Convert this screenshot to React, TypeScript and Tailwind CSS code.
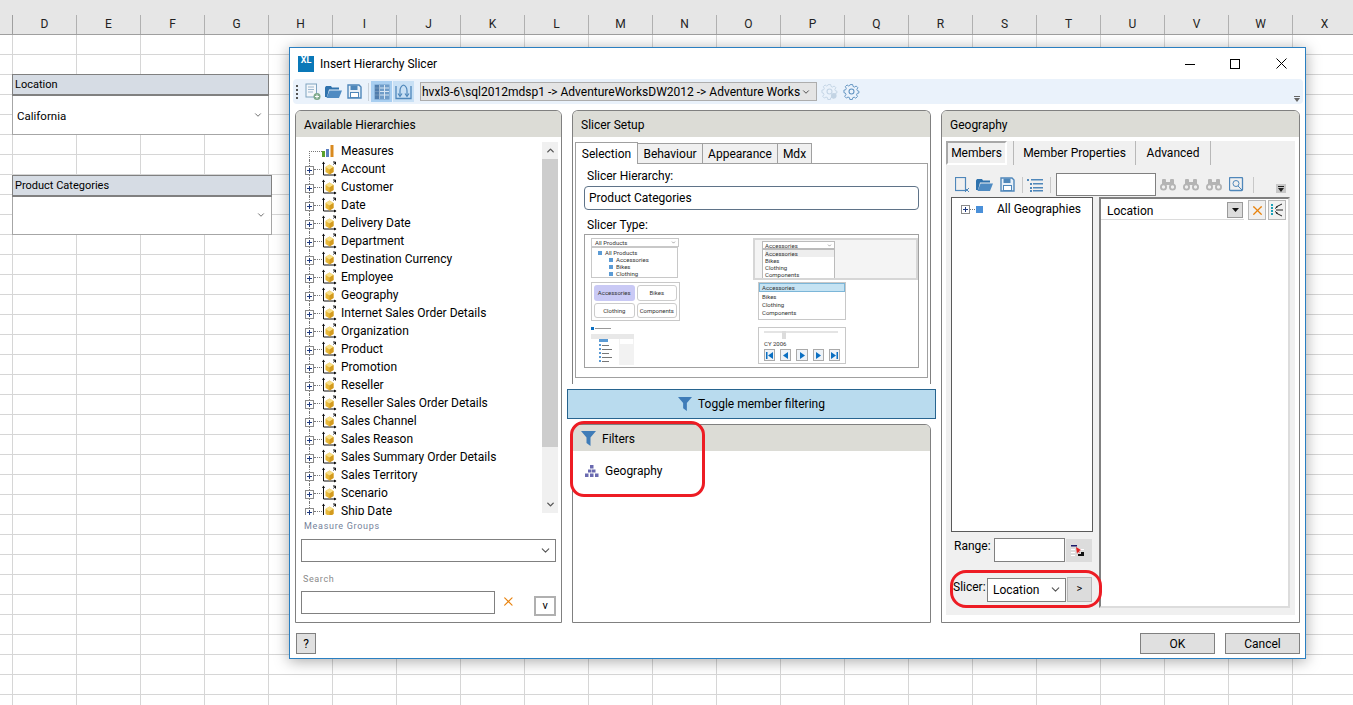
import { ChevronDown, ChevronUp, X } from 'lucide-react';

const columns = ['D', 'E', 'F', 'G', 'H', 'I', 'J', 'K', 'L', 'M', 'N', 'O', 'P', 'Q', 'R', 'S', 'T', 'U', 'V', 'W', 'X'];
const rows = Array.from({ length: 34 }, (_, i) => i);
const hierarchies = [
  'Account', 'Customer', 'Date', 'Delivery Date', 'Department', 'Destination Currency', 'Employee', 'Geography',
  'Internet Sales Order Details', 'Organization', 'Product', 'Promotion', 'Reseller', 'Reseller Sales Order Details',
  'Sales Channel', 'Sales Reason', 'Sales Summary Order Details', 'Sales Territory', 'Scenario', 'Ship Date',
];

function Sheet() {
  return (
    <div className="flex flex-col">
      <div className="h-[15px] bg-[#e6e6e6]" />
      <div className="flex h-[20px] bg-[#e6e6e6] border-b border-[#9f9f9f]">
        <div className="w-[13px] shrink-0 border-r border-[#9f9f9f]" />
        {columns.map((c) => (
          <div key={c} className="w-[64px] shrink-0 border-r border-[#b0b0b0] text-center text-[12px] leading-[19px] text-[#222]">
            {c}
          </div>
        ))}
      </div>
      {rows.map((r) => (
        <div key={r} className="flex h-[20px] shrink-0 border-b border-[#d6d6d6]">
          <div className="w-[13px] shrink-0 border-r border-[#d6d6d6]" />
          {columns.map((c) => (
            <div key={c} className="w-[64px] shrink-0 border-r border-[#d6d6d6]" />
          ))}
        </div>
      ))}
    </div>
  );
}

function SheetSlicer({ title, value, className }: { title: string; value?: string; className: string }) {
  return (
    <div className={`absolute flex flex-col ${className}`}>
      <div className="h-[22px] shrink-0 border-2 border-[#808080] border-l border-r border-t bg-[#d6dce4] pl-[2px] text-[11px] leading-[20px] text-black">
        {title}
      </div>
      <div className="flex flex-1 items-center justify-between border border-t-0 border-[#a6a6a6] bg-white pl-[4px] pr-[5px] pt-[3px] text-[11.500px] text-black">
        <span>{value}</span>
        <ChevronDown size={10} className="mb-[4px] text-[#555]" strokeWidth={2} />
      </div>
    </div>
  );
}

function XlLogo() {
  return (
    <div className="flex h-[16px] w-[16px] items-start justify-center bg-[#0a78b8] text-[9px] font-bold leading-[9px] text-white">
      XL
    </div>
  );
}

function NewDocIcon() {
  return (
    <svg width="16" height="18" viewBox="0 0 16 18" className="shrink-0">
      <rect x="1" y="1" width="10.5" height="13" fill="#f4f7fa" stroke="#7fa3c0" />
      <path d="M3 4h6M3 6.5h6M3 9h5" stroke="#9db8cf" />
      <circle cx="12" cy="13.5" r="3.5" fill="#7da98a" />
      <path d="M10 13.5h4M12 11.5v4" stroke="#fff" />
    </svg>
  );
}

function FolderIcon() {
  return (
    <svg width="17" height="14" viewBox="0 0 17 14" className="shrink-0">
      <path d="M0 2.5 1 1h5l1 1.5h7v2H4L2 12H0z" fill="#2f72ad" />
      <path d="M4.5 5.5H17L14 13H1.5z" fill="#4f8bc2" />
    </svg>
  );
}

function SaveIcon() {
  return (
    <svg width="15" height="15" viewBox="0 0 15 15" className="shrink-0">
      <path d="M1 1h11l2 2v11H1z" fill="#e8f0f8" stroke="#4f87ba" strokeWidth="1.4" />
      <rect x="3.5" y="1.5" width="7" height="4.5" fill="#4f87ba" />
      <rect x="3.5" y="8.5" width="8" height="5" fill="#fff" stroke="#4f87ba" />
    </svg>
  );
}

function GridIcon() {
  return (
    <svg width="16" height="16" viewBox="0 0 16 16">
      <rect x="0.5" y="0.5" width="15" height="15" fill="#6f9cc8" />
      <path d="M5.5 1v14M10.5 1v14M1 4h14M1 7.500h14M1 11h14" stroke="#d8e6f3" />
      <rect x="1" y="1" width="4.500" height="14" fill="#44719f" opacity=".7" />
    </svg>
  );
}

function SwapIcon() {
  return (
    <svg width="17" height="16" viewBox="0 0 17 16" fill="none" stroke="#4f87ba">
      <path d="M1 2v12.500h15V2" strokeWidth="1.300" />
      <path d="M5 12V7c0-3 1-5 3.500-6M12 12V7c0-3-1-5-3.500-6" strokeWidth="1.200" />
      <path d="M3 9.500 5 12.500l2-3M10 9.500l2 3 2-3" strokeWidth="1.200" />
    </svg>
  );
}

function GearIcon({ color, check }: { color: string; check?: boolean }) {
  return (
    <svg width="17" height="17" viewBox="0 0 24 24" fill="none" stroke={color} strokeWidth="1.500" className="shrink-0">
      <path d="M10 2h4l.6 3 2.400 1 2.600-1.700 2.800 2.800L20.700 9.700l1 2.300 2.300.6v3l-2.800.6-1 2.400 1.600 2.500-2.800 2.800-2.600-1.700-2.300 1-.6 2.800h-4l-.6-3-2.400-1-2.500 1.700-2.800-2.800L3.300 18l-1-2.300L0 15v-4l2.800-.6 1-2.400L2.200 5.400 5 2.600l2.500 1.700 2-.9z" transform="scale(.88) translate(1.500 .5)" />
      <circle cx="12" cy="12" r="3.500" />
      {check && <circle cx="18" cy="18" r="4" fill={color} stroke="none" />}
    </svg>
  );
}

function HierarchyIcon() {
  return (
    <svg width="15" height="16" viewBox="0 0 15 16" className="shrink-0">
      <path d="M1.500 1.500v12.500H14" fill="none" stroke="#111" />
      <path d="M0 3l1.500-2.500L3 3zM12 12.500l2.500 1.500-2.500 1.500z" fill="#111" />
      <path d="M11.500 3.500l2-2.500" stroke="#111" />
      <path d="M11 1h2.500v2.500" fill="none" stroke="#111" />
      <path d="M3.500 6l4-2.500 4 2.500v5l-4 2.500-4-2.500z" fill="#e8b838" />
      <path d="M3.500 6l4 2.500 4-2.500-4-2.500z" fill="#f7de86" />
      <path d="M11.500 6v5l-4 2.500V8.500z" fill="#d39a1f" />
    </svg>
  );
}

function MeasuresIcon() {
  return (
    <svg width="12" height="12" viewBox="0 0 12 12" className="shrink-0">
      <rect x="0" y="6" width="3" height="6" fill="#5aa02c" />
      <rect x="4" y="4" width="3" height="8" fill="#5a7fc0" />
      <rect x="8.500" y="0" width="3" height="12" fill="#d98a1f" />
    </svg>
  );
}

function PlusBox() {
  return (
    <span className="flex h-[9px] w-[9px] shrink-0 items-center justify-center border border-[#8a8a8a] bg-white text-[9px] leading-none text-[#2a3f7a]">
      <svg width="5" height="5" viewBox="0 0 5 5"><path d="M0 2.500h5M2.500 0v5" stroke="#1f3a80" /></svg>
    </span>
  );
}

function TreeRow({ label, measures }: { label: string; measures?: boolean }) {
  return (
    <div className="relative flex h-[18px] shrink-0 items-center text-[12px] text-black">
      <span className={`absolute left-[7px] w-0 border-l border-dotted border-[#777] ${measures ? 'top-[9px] bottom-0' : 'top-0 bottom-0'}`} />
      {measures ? (
        <span className="ml-[7px] w-[13px] shrink-0 border-t border-dotted border-[#777]" />
      ) : (
        <>
          <span className="relative ml-[3px] mt-[2px]"><PlusBox /></span>
          <span className="w-[8px] shrink-0 border-t border-dotted border-[#777]" />
        </>
      )}
      {measures ? <MeasuresIcon /> : <HierarchyIcon />}
      <span className={`whitespace-nowrap ${measures ? 'ml-[7px]' : 'ml-[4px]'}`}>{label}</span>
    </div>
  );
}

function PanelHeader({ children }: { children: React.ReactNode }) {
  return (
    <div className="flex h-[26px] shrink-0 items-center rounded-t-[5px] bg-[#dcdcd6] pl-[8px] pt-[1px] text-[12px] text-black">
      {children}
    </div>
  );
}

function Funnel({ size = 15 }: { size?: number }) {
  return (
    <svg width={size} height={size} viewBox="0 0 15 15" className="shrink-0">
      <path d="M0 0h15L9.500 6.500V15l-4-3V6.500z" fill="#3f7cb8" />
    </svg>
  );
}

function AvailableHierarchies() {
  return (
    <div className="flex w-[267px] shrink-0 flex-col rounded-t-[6px] border border-[#808080]">
      <PanelHeader>Available Hierarchies</PanelHeader>
      <div className="flex h-[378px] shrink-0 pt-[5px] pl-[6px] pr-[3px]">
        <div className="h-[373px] flex-1 overflow-hidden">
          <TreeRow label="Measures" measures />
          {hierarchies.map((h) => (
            <TreeRow key={h} label={h} />
          ))}
        </div>
        <div className="flex h-[371px] w-[16px] shrink-0 flex-col bg-[#f0f0f0]">
          <div className="flex h-[17px] items-center justify-center"><ChevronUp size={11} strokeWidth={3} className="text-[#555]" /></div>
          <div className="h-[288px] bg-[#cdcdcd]" />
          <div className="flex-1" />
          <div className="flex h-[17px] items-center justify-center"><ChevronDown size={11} strokeWidth={3} className="text-[#555]" /></div>
        </div>
      </div>
      <div className="mt-[5px] pl-[8px] text-[9px] leading-[12px] tracking-[.7px] text-[#74819a]">Measure Groups</div>
      <div className="mx-[5px] mt-[7px] flex h-[23px] items-center justify-end border border-[#808080] bg-white pr-[3px]">
        <ChevronDown size={13} className="text-[#555]" />
      </div>
      <div className="mt-[11px] pl-[7px] text-[9px] leading-[12px] tracking-[.6px] text-[#8a8a8a]">Search</div>
      <div className="mx-[5px] mt-[6px] flex items-start">
        <div className="h-[23px] w-[197px] border border-[#808080] bg-white" />
        <X size={15} className="ml-[6px] mt-[3px] text-[#e8820c]" strokeWidth={1.800} />
        <div className="ml-[19px] mt-[5px] flex h-[20px] w-[22px] items-center justify-center border-2 border-[#b0b0b0] bg-white text-[11px] text-black">v</div>
      </div>
    </div>
  );
}

function ThumbFrame({ className, children }: { className: string; children?: React.ReactNode }) {
  return <div className={`overflow-hidden border border-[#c8c8c8] bg-white text-[6px] leading-[7px] text-[#333] ${className}`}>{children}</div>;
}

function NavGlyph({ d }: { d: string }) {
  return (
    <span className="flex h-[12px] w-[12px] items-center justify-center border border-[#aaa] bg-[#eef3f8]">
      <svg width="9" height="9" viewBox="0 0 9 9"><path d={d} fill="#0a6fc2" /></svg>
    </span>
  );
}

function MiniTreeLine({ wide }: { wide?: boolean }) {
  return (
    <div className="mt-[2px] flex items-center gap-[1px]">
      <span className="h-[2px] w-[2px] bg-[#5b9bd5]" />
      <span className={`h-[1px] bg-[#777] ${wide ? 'w-[10px]' : 'w-[7px]'}`} />
    </div>
  );
}

function SlicerTypes() {
  return (
    <div className="mx-[8px] flex h-[134px] shrink-0 gap-[72px] border border-[#a0a0a0] bg-white pl-[6px] pt-[3px]">
      <div className="flex w-[90px] shrink-0 flex-col">
        <div className="h-[40px] overflow-hidden text-[6px] leading-[7px] text-[#333]">
          <div className="flex h-[9px] w-[88px] items-center justify-between border border-[#c8c8c8] pl-[3px] pr-[2px]">All Products<ChevronDown size={5} /></div>
          <div className="h-[31px] w-[87px] border border-[#c8c8c8] pl-[6px] pt-[1px]">
            <div className="flex items-center gap-[3px]"><span className="h-[4px] w-[4px] bg-[#5b9bd5]" /><span>All Products</span></div>
            <div className="ml-[11px] flex items-center gap-[3px]"><span className="h-[4px] w-[4px] bg-[#5b9bd5]" /><span>Accessories</span></div>
            <div className="ml-[11px] flex items-center gap-[3px]"><span className="h-[4px] w-[4px] bg-[#5b9bd5]" /><span>Bikes</span></div>
            <div className="ml-[11px] flex items-center gap-[3px]"><span className="h-[4px] w-[4px] bg-[#5b9bd5]" /><span>Clothing</span></div>
          </div>
        </div>
        <ThumbFrame className="mt-[4px] grid h-[39px] w-[89px] grid-cols-2 gap-[2px] p-[2px]">
          <div className="flex items-center justify-center rounded-[3px] bg-[#c9c9f5]">Accessories</div>
          <div className="flex items-center justify-center rounded-[3px] border border-[#ccc]">Bikes</div>
          <div className="flex items-center justify-center rounded-[3px] border border-[#ccc]">Clothing</div>
          <div className="flex items-center justify-center rounded-[3px] border border-[#ccc]">Components</div>
        </ThumbFrame>
        <div className="mt-[6px] flex h-[38px] w-[43px] flex-col overflow-hidden">
          <div className="flex h-[7px] shrink-0 items-start gap-[1px] bg-white">
            <span className="h-[3px] w-[3px] bg-[#0a6fc2]" />
            <span className="mt-[1px] h-[1px] w-[16px] bg-[#999]" />
          </div>
          <div className="h-[5px] shrink-0 bg-[#e8e8e8]" />
          <div className="flex flex-1 bg-[#f2f2f2]">
            <div className="h-full w-[28px] bg-white pl-[8px]">
              <div className="h-[3px] w-[9px] bg-[#5b9bd5]" />
              <MiniTreeLine />
              <MiniTreeLine wide />
              <MiniTreeLine />
              <MiniTreeLine wide />
              <MiniTreeLine />
            </div>
            <div className="ml-[1px] h-[5px] w-[13px] bg-white" />
          </div>
        </div>
      </div>
      <div className="flex w-[165px] shrink-0 flex-col">
        <div className="h-[42px] bg-[#d6d6d6] p-[2px]">
          <div className="h-[38px] overflow-hidden bg-[#f4f4f4] pl-[7px] pt-[1px] text-[6px] leading-[7px] text-[#333]">
            <div className="flex h-[8px] w-[73px] items-center justify-between border border-[#bbb] bg-white pl-[2px] pr-[2px]">Accessories<ChevronDown size={5} /></div>
            <div className="h-[30px] w-[73px] border border-[#bbb] bg-white pl-[2px]">
              <div className="bg-[#eee]">Accessories</div>
              <div>Bikes</div>
              <div>Clothing</div>
              <div>Components</div>
            </div>
          </div>
        </div>
        <ThumbFrame className="ml-[5px] mt-[2px] h-[38px] w-[88px]">
          <div className="border border-[#7cb6d8] bg-[#c5e3f3] pl-[2px]">Accessories</div>
          <div className="mt-px pl-[3px]">Bikes</div>
          <div className="mt-px pl-[3px]">Clothing</div>
          <div className="mt-px pl-[3px]">Components</div>
        </ThumbFrame>
        <ThumbFrame className="ml-[5px] mt-[7px] h-[37px] w-[88px] px-[5px] pt-[1px]">
          <div className="relative h-[6px]">
            <div className="mt-[2px] h-[2px] w-[74px] bg-[#e4e4e4]" />
            <div className="absolute left-[18px] top-0 h-[8px] w-[4px] bg-[#dcdcdc]" />
          </div>
          <div className="mt-[3px]">CY 2006</div>
          <div className="mt-[2px] flex gap-[5px]">
            <NavGlyph d="M1 1h1.500v7H1zM8 1v7L3 4.500z" />
            <NavGlyph d="M7 1v7L2 4.500z" />
            <NavGlyph d="M2 1v7l5-3.500z" />
            <NavGlyph d="M2 1v7l5-3.500z" />
            <NavGlyph d="M1 1v7l5-3.500zM6.500 1H8v7H6.500z" />
          </div>
        </ThumbFrame>
      </div>
    </div>
  );
}

function SlicerSetup() {
  return (
    <div className="flex h-[274px] shrink-0 flex-col rounded-t-[6px] border border-b-0 border-[#808080]">
      <PanelHeader>Slicer Setup</PanelHeader>
      <div className="flex h-[26px] shrink-0 items-end pl-[2px] text-[12px] text-black">
        <div className="relative z-10 -mb-px flex h-[22px] w-[63px] items-center justify-center border border-b-0 border-[#a0a0a0] bg-white">Selection</div>
        <div className="flex h-[20px] w-[65px] items-center justify-center border border-b-0 border-l-0 border-[#a0a0a0] bg-[#f0f0f0]">Behaviour</div>
        <div className="flex h-[20px] w-[75px] items-center justify-center border border-b-0 border-l-0 border-[#a0a0a0] bg-[#f0f0f0]">Appearance</div>
        <div className="flex h-[20px] w-[34px] items-center justify-center border border-b-0 border-l-0 border-[#a0a0a0] bg-[#f0f0f0]">Mdx</div>
      </div>
      <div className="mx-[2px] flex h-[215px] shrink-0 flex-col border border-[#a0a0a0] text-[12px] text-black">
        <div className="mt-[4px] h-[18px] pl-[11px] leading-[17px]">Slicer Hierarchy:</div>
        <div className="mx-[8px] flex h-[24px] items-center rounded-[4px] border border-[#5f7388] pl-[4px]">Product Categories</div>
        <div className="mt-[7px] h-[17px] pl-[11px] leading-[17px]">Slicer Type:</div>
        <SlicerTypes />
      </div>
    </div>
  );
}

function Filters() {
  return (
    <div className="flex h-[199px] shrink-0 flex-col rounded-t-[6px] border border-[#808080]">
      <PanelHeader>
        <Funnel />
        <span className="ml-[6px]">Filters</span>
      </PanelHeader>
      <div className="ml-[12px] mt-[11px] flex items-center text-[12px] text-black">
        <svg width="14" height="14" viewBox="0 0 14 14" className="shrink-0" fill="#6a6ab0">
          <rect x="5" y="1" width="3.500" height="3.500" />
          <rect x="3" y="5.500" width="3.500" height="3" />
          <rect x="7" y="5.500" width="3.500" height="3" />
          <rect x="0" y="9.500" width="3.500" height="3.500" />
          <rect x="5" y="9.500" width="3.500" height="3.500" />
          <rect x="10" y="9.500" width="3.500" height="3.500" />
        </svg>
        <span className="ml-[6px]">Geography</span>
      </div>
    </div>
  );
}

function Binoculars() {
  return (
    <svg width="16" height="13" viewBox="0 0 16 13" fill="#b4b4b4" className="shrink-0">
      <circle cx="3.500" cy="9" r="3.500" />
      <circle cx="12.500" cy="9" r="3.500" />
      <rect x="2" y="1" width="4" height="6" rx="1" />
      <rect x="10" y="1" width="4" height="6" rx="1" />
      <rect x="6" y="4" width="4" height="3" />
      <circle cx="3.500" cy="9" r="1.700" fill="#f0f0f0" />
      <circle cx="12.500" cy="9" r="1.700" fill="#f0f0f0" />
    </svg>
  );
}

function GeographyPanel() {
  return (
    <div className="flex w-[359px] shrink-0 flex-col rounded-t-[6px] border border-[#808080]">
      <PanelHeader>Geography</PanelHeader>
      <div className="mx-[4px] mb-[7px] mt-[4px] flex flex-1 flex-col bg-[#f0f0f0]">
        <div className="flex h-[24px] shrink-0 items-stretch text-[12px] text-black">
          <div className="flex w-[61px] items-center justify-center border-2 border-[#a8a8a8] border-r-white border-b-white">Members</div>
          <div className="ml-[6px] flex w-[123px] items-center justify-center border-l border-r border-[#b8b8b8]">Member Properties</div>
          <div className="flex w-[75px] items-center justify-center border-r border-[#b8b8b8]">Advanced</div>
        </div>
        <div className="mt-[7px] flex h-[25px] shrink-0 items-center pl-[9px]">
          <svg width="15" height="16" viewBox="0 0 15 16" fill="none" className="shrink-0"><rect x=".5" y=".5" width="10" height="13" stroke="#4f87ba" strokeWidth="1.200" /><path d="M10 11l4 4M14 11l-4 4" stroke="#4f87ba" /></svg>
          <span className="ml-[6px]"><FolderIcon /></span>
          <span className="ml-[7px]"><SaveIcon /></span>
          <span className="ml-[7px] h-[16px] w-px bg-[#c8c8c8]" />
          <svg width="16" height="14" viewBox="0 0 16 14" className="ml-[4px] shrink-0" fill="#4f87ba"><rect x="0" y="1" width="2" height="2" /><rect x="4" y="1" width="12" height="1.500" /><rect x="3" y="5" width="2" height="2" /><rect x="6" y="5" width="10" height="1.500" /><rect x="3" y="9" width="2" height="2" /><rect x="6" y="9" width="10" height="1.500" /><rect x="3" y="12" width="2" height="2" /><rect x="6" y="12" width="10" height="1.500" /></svg>
          <span className="ml-[7px] h-[16px] w-px bg-[#c8c8c8]" />
          <div className="ml-[5px] h-[23px] w-[100px] shrink-0 border border-[#808080] bg-white" />
          <div className="ml-[4px] flex items-center gap-[7px]"><Binoculars /><Binoculars /><Binoculars /></div>
          <svg width="15" height="15" viewBox="0 0 15 15" fill="none" stroke="#4f87ba" className="ml-[7px] shrink-0"><rect x=".5" y=".5" width="13" height="13" rx="1" strokeWidth="1.300" /><circle cx="7" cy="6.500" r="3" /><path d="M9 9l4 4" /></svg>
          <span className="ml-[9px] h-[16px] w-px bg-[#c8c8c8]" />
          <div className="ml-[22px] mt-[8px] flex h-[9px] w-[10px] items-center justify-center bg-[#c8c8c8]"><svg width="6" height="6" viewBox="0 0 6 6"><path d="M0 0h6v1H0zM0 2h6L3 6z" fill="#222" /></svg></div>
        </div>
        <div className="flex flex-1 pl-[5px] pr-[5px]">
          <div className="flex w-[142px] shrink-0 flex-col">
            <div className="h-[335px] shrink-0 border border-[#5a5a5a] bg-white pl-[9px] pt-[3px]">
              <div className="flex items-center text-[12px] leading-[16px] text-black">
                <PlusBox />
                <span className="w-[5px] border-t border-dotted border-[#777]" />
                <span className="ml-[1px] h-[7px] w-[7px] bg-[#4a90d9]" />
                <span className="ml-[14px]">All Geographies</span>
              </div>
            </div>
            <div className="mt-[6px] flex h-[24px] shrink-0 items-center text-[12px] text-black">
              <span className="ml-[3px] mb-[8px] w-[40px]">Range:</span>
              <div className="h-[24px] w-[71px] border border-[#808080] bg-white" />
              <div className="ml-px flex h-[23px] w-[26px] items-center justify-center bg-[#dcdcdc]">
                <svg width="16" height="13" viewBox="0 0 16 13">
                  <path d="M0 1h6v1.500H0z" fill="#1a1a6a" />
                  <path d="M0 5h4v1H0zM8 5h5v1H8zM0 8h4v1H0zM0 11h4v1H0z" fill="#fff" />
                  <path d="M5 3l5 3-2 1 1 2-2-1-1 2z" fill="#e02020" />
                  <path d="M10 8h3v2h-3zM7 10h6v2H7z" fill="#111" />
                </svg>
              </div>
            </div>
            <div className="mt-[15px] flex h-[25px] shrink-0 items-center text-[12px] text-black">
              <span className="ml-[2px] mb-[5px] w-[34px]">Slicer:</span>
              <div className="flex h-[24px] w-[79px] items-center justify-between border border-[#808080] bg-white pl-[5px] pr-[3px]">
                Location
                <ChevronDown size={13} className="text-[#555]" />
              </div>
              <div className="ml-px flex h-[25px] w-[25px] items-center justify-center border border-[#b8b8b8] bg-[#dcdcdc] text-[11px]">&gt;</div>
            </div>
          </div>
          <div className="ml-[6px] flex h-[411px] w-[191px] shrink-0 flex-col border-2 border-[#808080] border-r-[#dcdcdc] border-b-[#dcdcdc] bg-white">
            <div className="flex h-[22px] items-center">
              <div className="flex h-[20px] w-[143px] items-center justify-between border-b border-[#dcdcdc] pl-[6px] pr-[1px] text-[12px] text-black">
                <span className="pt-[2px]">Location</span>
                <span className="flex h-[16px] w-[16px] items-center justify-center border border-[#9a9a9a] bg-[#dcdcdc]"><svg width="7" height="4" viewBox="0 0 7 4"><path d="M0 0h7L3.500 4z" fill="#111" /></svg></span>
              </div>
              <span className="ml-[4px] flex h-[20px] w-[18px] items-center justify-center border border-[#b8b8b8] bg-[#f0f0f0]"><X size={15} strokeWidth={2} className="text-[#e8820c]" /></span>
              <span className="ml-[2px] flex h-[20px] w-[18px] items-center justify-center border border-[#b8b8b8] bg-[#f0f0f0]">
                <svg width="14" height="14" viewBox="0 0 14 14" fill="none"><path d="M2 1v12" stroke="#1aa0b8" strokeWidth="2" strokeDasharray="2 1" /><path d="M6 4l6-3M6 7h7M6 10l6 3M5 5.500l3-2M5 8.500l3 2" stroke="#222" /></svg>
              </span>
            </div>
          </div>
        </div>
      </div>
    </div>
  );
}

function Dialog() {
  return (
    <div className="absolute left-[289px] top-[47px] flex h-[612px] w-[1017px] flex-col border border-[#2a7fc1] bg-white shadow-[0_2px_14px_rgba(0,0,0,0.35)]">
      <div className="flex h-[31px] shrink-0 items-center pl-[8px] text-[12px] text-black">
        <XlLogo />
        <span className="ml-[6px]">Insert Hierarchy Slicer</span>
        <div className="ml-auto flex items-center">
          <svg width="10" height="10" viewBox="0 0 10 10" className="mr-[35px]"><path d="M0 5.500h10" stroke="#000" /></svg>
          <svg width="10" height="10" viewBox="0 0 10 10" className="mr-[36px]"><rect x=".5" y=".5" width="9" height="9" fill="none" stroke="#000" /></svg>
          <svg width="11" height="11" viewBox="0 0 11 11" className="mr-[18px]"><path d="M.5.5l10 10M10.500.5l-10 10" stroke="#000" /></svg>
        </div>
      </div>
      <div className="ml-[3px] mr-[2px] flex h-[25px] shrink-0 items-center rounded-[4px] bg-[#eaf2fb]">
        <div className="ml-[3px] flex w-[3px] flex-col gap-[2px]">
          <span className="h-[2px] w-[2px] bg-[#555]" /><span className="h-[2px] w-[2px] bg-[#555]" /><span className="h-[2px] w-[2px] bg-[#555]" /><span className="h-[2px] w-[2px] bg-[#555]" />
        </div>
        <span className="ml-[6px]"><NewDocIcon /></span>
        <span className="ml-[4px]"><FolderIcon /></span>
        <span className="ml-[5px]"><SaveIcon /></span>
        <span className="ml-[6px] h-[18px] w-px bg-[#c8d0d8]" />
        <span className="ml-[2px] flex h-[21px] w-[21px] items-center justify-center bg-[#a8cef0]"><GridIcon /></span>
        <span className="ml-px flex h-[21px] w-[21px] items-center justify-center bg-[#c8e0f5]"><SwapIcon /></span>
        <div className="ml-[6px] flex h-[19px] w-[397px] shrink-0 items-center justify-between border border-[#adadad] bg-[#e4e4e4] pl-[1px] pr-[5px] text-[12px] text-black">
          <span className="whitespace-nowrap">hvxl3-6\sql2012mdsp1 -&gt; AdventureWorksDW2012 -&gt; Adventure Works</span>
          <ChevronDown size={10} className="text-[#333]" />
        </div>
        <span className="ml-[4px]"><GearIcon color="#c3d4e4" check /></span>
        <span className="ml-[5px]"><GearIcon color="#5f92c0" /></span>
        <span className="ml-auto mr-[3px] mt-[15px]"><svg width="6" height="6" viewBox="0 0 6 6"><path d="M0 0h6v1H0zM0 2h6L3 6z" fill="#666" /></svg></span>
      </div>
      <div className="mt-[6px] flex h-[513px] shrink-0 gap-[10px] pl-[5px]">
        <AvailableHierarchies />
        <div className="flex w-[359px] shrink-0 flex-col">
          <SlicerSetup />
          <div className="-mx-[5px] my-[5px] flex h-[30px] shrink-0 items-center justify-center border border-[#27648f] bg-[#b9dbee] text-[12px] text-black">
            <Funnel size={14} />
            <span className="ml-[6px]">Toggle member filtering</span>
          </div>
          <Filters />
        </div>
        <GeographyPanel />
      </div>
      <div className="mt-[10px] flex items-start pl-[6px] pr-[5px] text-[12px] text-black">
        <div className="flex h-[21px] w-[20px] items-center justify-center border border-[#808080] bg-[#e0e0e0]">?</div>
        <div className="ml-auto flex h-[21px] w-[75px] items-center justify-center border border-[#808080] bg-[#e0e0e0]">OK</div>
        <div className="ml-[10px] flex h-[21px] w-[75px] items-center justify-center border border-[#808080] bg-[#e0e0e0]">Cancel</div>
      </div>
    </div>
  );
}

export default function App() {
  return (
    <div className="relative h-[705px] w-[1353px] overflow-hidden bg-white font-['Roboto',sans-serif]">
      <Sheet />
      <SheetSlicer title="Location" value="California" className="left-[12px] top-[74px] h-[61px] w-[257px]" />
      <SheetSlicer title="Product Categories" className="left-[12px] top-[175px] h-[60px] w-[260px]" />
      <Dialog />
      {/* hand-drawn red callouts over the dialog */}
      <div className="absolute left-[570px] top-[421px] h-[76px] w-[135px] rounded-[14px] border-[3px] border-[#ed1c24]" />
      <div className="absolute left-[950px] top-[570px] h-[38px] w-[152px] rounded-[16px] border-[3px] border-[#ed1c24]" />
    </div>
  );
}
